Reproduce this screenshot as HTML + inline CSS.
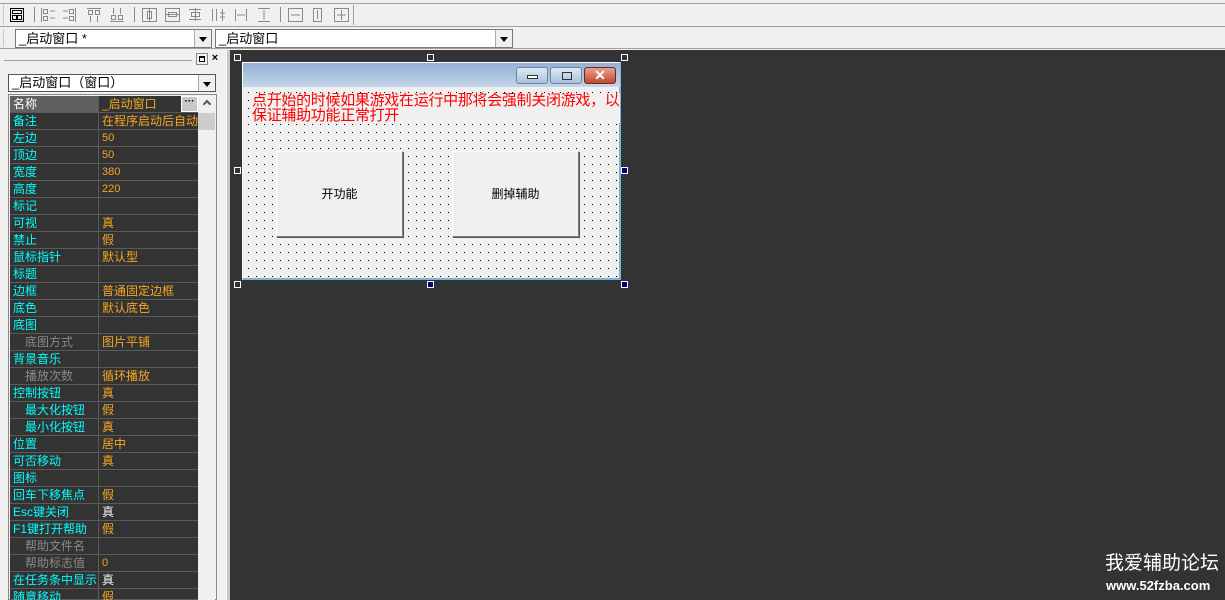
<!DOCTYPE html>
<html><head><meta charset="utf-8"><style>
*{margin:0;padding:0;box-sizing:border-box}
html,body{width:1225px;height:600px;overflow:hidden}
body{background:#f0f0f0;font-family:"Liberation Sans","Noto Sans CJK SC","WenQuanYi Zen Hei",sans-serif;font-size:12px;position:relative}
.abs{position:absolute}
.combo{position:absolute;background:#fff;border:1px solid #7a7a7a;height:19px;font-size:13px;line-height:17px;padding-left:3px;color:#000}
.combo .btn{position:absolute;right:0;top:0;width:17px;height:17px;background:#f0f0f0;border-left:1px solid #aaa}
.combo .btn:after{content:"";position:absolute;left:4px;top:7px;border-left:4px solid transparent;border-right:4px solid transparent;border-top:5px solid #000}
.row{position:absolute;left:10px;width:188px;height:17px;border-bottom:1px solid #5a5a5a;background:#333}
.row .n{position:absolute;left:0;top:0;width:89px;height:16px;border-right:1px solid #5a5a5a;color:#00ffff;padding-left:3px;line-height:16px;font-size:12px;white-space:nowrap;overflow:hidden}
.row .v{position:absolute;left:92px;top:0;color:#f5a623;line-height:16px;white-space:nowrap;overflow:hidden;width:96px}
.row .g{color:#8a8a8a;padding-left:15px}
.row .i{padding-left:15px}
.h{position:absolute;width:7px;height:7px;border:1px solid #fff;background:#333}
.hb{background:#000080}
.wbtn{position:absolute;top:4px;height:17px;border:1px solid #6d85a5;border-radius:3px;background:linear-gradient(#dfe9f5,#a9c0dc)}
.pb{position:absolute;background:#f0f0f0;border:1px solid;border-color:#fff #808080 #808080 #fff;box-shadow:1px 1px 0 #555;text-align:center;font-size:12px;color:#000}
</style></head><body>
<div class="abs" style="left:0;top:3px;width:1225px;height:1px;background:#a0a0a0"></div>
<div class="abs" style="left:3px;top:5px;width:1px;height:20px;background:#c8c8c8"></div>
<div class="abs" style="left:353px;top:5px;width:1px;height:20px;background:#a0a0a0"></div>
<svg class="abs" style="left:0;top:0" width="360" height="27" fill="none" stroke="#8a8a8a" stroke-width="1">
<rect x="10.5" y="8.5" width="13" height="13" stroke="#000"/><rect x="12.5" y="10.5" width="9" height="3" stroke="#000"/><rect x="12.5" y="15.5" width="4" height="4" stroke="#000"/><rect x="17.5" y="15.5" width="4" height="4" stroke="#000"/>
<line x1="34.5" y1="7" x2="34.5" y2="22"/><line x1="134.5" y1="7" x2="134.5" y2="22"/><line x1="280.5" y1="7" x2="280.5" y2="22"/>
<path d="M41.5 8v14M43.5 9.5h4v4h-4zM43.5 16.5h4v4h-4zM50 11h5M50 18h5"/>
<path d="M75.5 8v14M69.5 9.5h4v4h-4zM69.5 16.5h4v4h-4zM63 11h5M63 18h5"/>
<path d="M87 8.5h14M88.5 10.5h4v4h-4zM95.5 10.5h4v4h-4zM90.5 16v6M97.5 16v6"/>
<path d="M110 21.5h14M111.5 15.5h4v4h-4zM118.5 15.5h4v4h-4zM113.5 8v6M120.5 8v6"/>
<path d="M142.5 8.5h14v13h-14zM147.5 11.5h4v7h-4zM149.5 8v13"/>
<path d="M165.5 8.5h14v13h-14zM168.5 12.5h8v4h-8zM165 14.5h15"/>
<path d="M189 9.5h12M191.5 12.5h8v4h-8zM189 19.5h12M195.5 8v13"/>
<path d="M212.5 9v12M216.5 9v12M220 13h5M220 17h5M222.5 9v12"/>
<path d="M235.5 9v12M246.5 9v12M237 15h8"/>
<path d="M258 8.5h12M258 21.5h12M264 10v10"/>
<path d="M288.5 8.5h14v13h-14zM291 15h9"/>
<path d="M313.5 8.5h8v13h-8zM317.5 10v9"/>
<path d="M334.5 8.5h14v13h-14zM337 15h9M341.5 10v10"/>
</svg>
<div class="abs" style="left:0;top:26px;width:1225px;height:1px;background:#a0a0a0"></div>
<div class="abs" style="left:3px;top:29px;width:1px;height:18px;background:#c8c8c8"></div>
<div class="combo" style="left:15px;top:29px;width:197px">_启动窗口 *<div class="btn"></div></div>
<div class="combo" style="left:215px;top:29px;width:298px">_启动窗口<div class="btn"></div></div>
<div class="abs" style="left:0;top:48px;width:1225px;height:1px;background:#a0a0a0"></div>
<div class="abs" style="left:230px;top:50px;width:995px;height:550px;background:#333"></div>
<div class="abs" style="left:226px;top:50px;width:4px;height:550px;background:#c8c8c8;border-left:1px solid #fff"></div>
<div class="abs" style="left:4px;top:60px;width:188px;height:1px;background:#a0a0a0"></div>
<div class="abs" style="left:196px;top:53px;width:12px;height:12px;border:1px solid #888;background:#f0f0f0"><div style="margin:2px;width:6px;height:6px;border:1px solid #000;border-top-width:2px"></div></div>
<div class="abs" style="left:209px;top:52px;width:12px;height:13px;font-size:11px;font-weight:bold;text-align:center;line-height:13px">×</div>
<div class="combo" style="left:8px;top:74px;width:208px;height:18px;line-height:16px;border-color:#555">_启动窗口（窗口）<div class="btn" style="height:16px"></div></div>
<div class="abs" style="left:8px;top:94px;width:209px;height:506px;border:1px solid #888;background:#f0f0f0"></div>
<div class="abs" style="left:198px;top:96px;width:17px;height:504px;background:#f0f0f0"></div>
<div class="abs" style="left:198px;top:113px;width:17px;height:17px;background:#cdcdcd"></div>
<div class="abs" style="left:204px;top:101px;width:6px;height:6px;border-left:2px solid #555;border-top:2px solid #555;transform:rotate(45deg)"></div>
<div class="row" style="top:96px;background:#333"><div class="n" style="background:#606060;color:#fff">名称</div><div class="v" style="left:92px">_启动窗口</div><div class="abs" style="left:171px;top:0;width:17px;height:16px;background:#c8c8c8;border:1px solid #fff;font-size:10px;line-height:10px;text-align:center;font-weight:bold">···</div></div>
<div class="row" style="top:113px"><div class="n">备注</div><div class="v">在程序启动后自动</div></div>
<div class="row" style="top:130px"><div class="n">左边</div><div class="v" style="font-size:11px">50</div></div>
<div class="row" style="top:147px"><div class="n">顶边</div><div class="v" style="font-size:11px">50</div></div>
<div class="row" style="top:164px"><div class="n">宽度</div><div class="v" style="font-size:11px">380</div></div>
<div class="row" style="top:181px"><div class="n">高度</div><div class="v" style="font-size:11px">220</div></div>
<div class="row" style="top:198px"><div class="n">标记</div><div class="v"></div></div>
<div class="row" style="top:215px"><div class="n">可视</div><div class="v">真</div></div>
<div class="row" style="top:232px"><div class="n">禁止</div><div class="v">假</div></div>
<div class="row" style="top:249px"><div class="n">鼠标指针</div><div class="v">默认型</div></div>
<div class="row" style="top:266px"><div class="n">标题</div><div class="v"></div></div>
<div class="row" style="top:283px"><div class="n">边框</div><div class="v">普通固定边框</div></div>
<div class="row" style="top:300px"><div class="n">底色</div><div class="v">默认底色</div></div>
<div class="row" style="top:317px"><div class="n">底图</div><div class="v"></div></div>
<div class="row" style="top:334px"><div class="n g">底图方式</div><div class="v">图片平铺</div></div>
<div class="row" style="top:351px"><div class="n">背景音乐</div><div class="v"></div></div>
<div class="row" style="top:368px"><div class="n g">播放次数</div><div class="v">循环播放</div></div>
<div class="row" style="top:385px"><div class="n">控制按钮</div><div class="v">真</div></div>
<div class="row" style="top:402px"><div class="n i">最大化按钮</div><div class="v">假</div></div>
<div class="row" style="top:419px"><div class="n i">最小化按钮</div><div class="v">真</div></div>
<div class="row" style="top:436px"><div class="n">位置</div><div class="v">居中</div></div>
<div class="row" style="top:453px"><div class="n">可否移动</div><div class="v">真</div></div>
<div class="row" style="top:470px"><div class="n">图标</div><div class="v"></div></div>
<div class="row" style="top:487px"><div class="n">回车下移焦点</div><div class="v">假</div></div>
<div class="row" style="top:504px"><div class="n">Esc键关闭</div><div class="v" style="color:#eee">真</div></div>
<div class="row" style="top:521px"><div class="n">F1键打开帮助</div><div class="v">假</div></div>
<div class="row" style="top:538px"><div class="n g">帮助文件名</div><div class="v"></div></div>
<div class="row" style="top:555px"><div class="n g">帮助标志值</div><div class="v" style="font-size:11px">0</div></div>
<div class="row" style="top:572px"><div class="n">在任务条中显示</div><div class="v" style="color:#eee">真</div></div>
<div class="row" style="top:589px;height:11px"><div class="n">随意移动</div><div class="v">假</div></div>
<div class="h" style="left:234px;top:54px"></div><div class="h" style="left:427px;top:54px"></div><div class="h" style="left:621px;top:54px"></div>
<div class="h" style="left:234px;top:167px"></div><div class="h hb" style="left:621px;top:167px"></div>
<div class="h" style="left:234px;top:281px"></div><div class="h hb" style="left:427px;top:281px"></div><div class="h hb" style="left:621px;top:281px"></div>
<div class="abs" style="left:242px;top:62px;width:379px;height:218px;border:1px solid #fff;border-bottom:2px solid #7ab4d8;border-right:2px solid #7ab4d8;background-color:#f0f0f0;background-image:linear-gradient(90deg,#f0f0f0 7px,transparent 7px),linear-gradient(#f0f0f0 7px,#000 7px);background-size:8px 8px,8px 8px;background-position:-2px 22px,-2px 22px">
<div class="abs" style="left:0;top:0;width:377px;height:24px;background:linear-gradient(#94b0d2,#c4d6ea)"></div>
<div class="wbtn" style="left:273px;width:32px"><div class="abs" style="left:10px;top:7px;width:11px;height:4px;border:1px solid #333;background:#fff"></div></div>
<div class="wbtn" style="left:307px;width:32px"><div class="abs" style="left:11px;top:4px;width:10px;height:8px;border:1px solid #333"></div></div>
<div class="wbtn" style="left:341px;width:32px;background:linear-gradient(#e8a090,#c04a30);border-color:#6b2a20;color:#fff;font-weight:bold;font-size:14px;text-align:center;line-height:15px">✕</div>
<div class="abs" style="left:9px;top:30px;width:368px;color:#f00;font-size:15px;line-height:15px;letter-spacing:-0.3px;background:#f0f0f0">点开始的时候如果游戏在运行中那将会强制关闭游戏，以<br>保证辅助功能正常打开</div>
<div class="pb" style="left:33px;top:88px;width:127px;height:86px;line-height:84px">开功能</div>
<div class="pb" style="left:209px;top:88px;width:127px;height:86px;line-height:84px">删掉辅助</div>
</div>
<div class="abs" style="left:1105px;top:553px;color:#fff;font-size:19px;line-height:22px">我爱辅助论坛</div>
<div class="abs" style="left:1106px;top:578px;color:#fff;font-size:13px;font-weight:bold">www.52fzba.com</div>
</body></html>
